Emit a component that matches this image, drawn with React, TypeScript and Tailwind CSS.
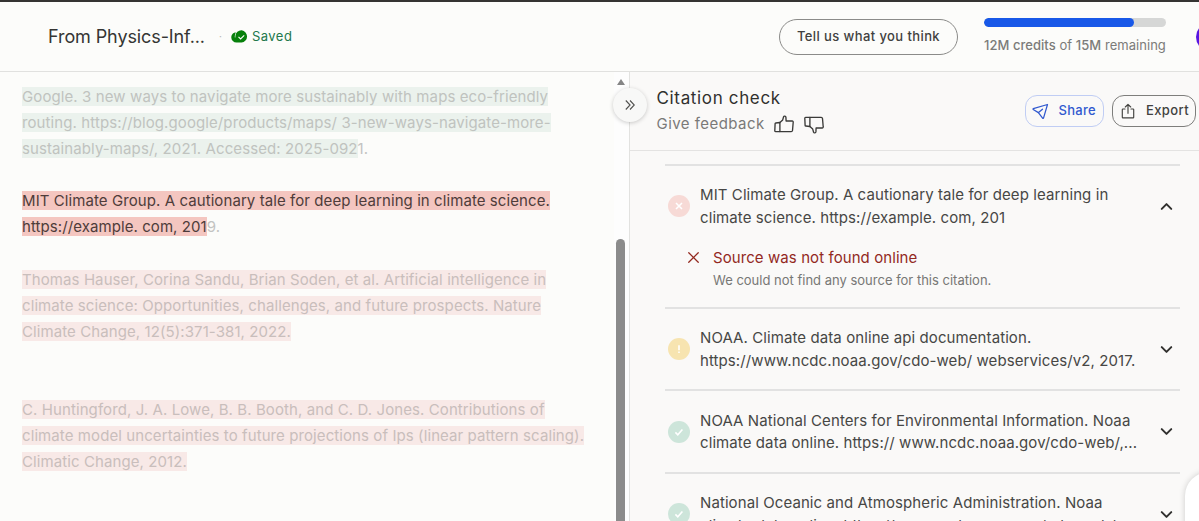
import { ChevronDown, ChevronUp, X } from 'lucide-react';
import clsx from 'clsx';

type Tone = 'ok' | 'active' | 'missing';
type Status = 'error' | 'warning' | 'success';

interface Reference {
  tone: Tone;
  lines: string[];
  tail?: string;
  className?: string;
}

interface Citation {
  status: Status;
  lines: string[];
  open?: boolean;
}

const references: Reference[] = [
  {
    tone: 'ok',
    lines: [
      'Google. 3 new ways to navigate more sustainably with maps eco-friendly',
      'routing. https://blog.google/products/maps/ 3-new-ways-navigate-more-',
      'sustainably-maps/, 2021. Accessed: 2025-092',
    ],
    tail: '1.',
    className: 'mb-[26.1px]',
  },
  {
    tone: 'active',
    lines: [
      'MIT Climate Group. A cautionary tale for deep learning in climate science.',
      'https://example. com, 201',
    ],
    tail: '9.',
    className: 'mb-[26.1px] tracking-[0.08px]',
  },
  {
    tone: 'missing',
    lines: [
      'Thomas Hauser, Corina Sandu, Brian Soden, et al. Artificial intelligence in',
      'climate science: Opportunities, challenges, and future prospects. Nature',
      'Climate Change, 12(5):371-381, 2022.',
    ],
    className: 'mb-[52.2px] tracking-[0.09px]',
  },
  {
    tone: 'missing',
    lines: [
      'C. Huntingford, J. A. Lowe, B. B. Booth, and C. D. Jones. Contributions of',
      'climate model uncertainties to future projections of Ips (linear pattern scaling).',
      'Climatic Change, 2012.',
    ],
    className: 'tracking-[0.09px]',
  },
];

const citations: Citation[] = [
  {
    status: 'error',
    lines: [
      'MIT Climate Group. A cautionary tale for deep learning in',
      'climate science. https://example. com, 201',
    ],
    open: true,
  },
  {
    status: 'warning',
    lines: [
      'NOAA. Climate data online api documentation.',
      'https://www.ncdc.noaa.gov/cdo-web/ webservices/v2, 2017.',
    ],
  },
  {
    status: 'success',
    lines: [
      'NOAA National Centers for Environmental Information. Noaa',
      'climate data online. https:// www.ncdc.noaa.gov/cdo-web/,...',
    ],
  },
  {
    status: 'success',
    lines: [
      'National Oceanic and Atmospheric Administration. Noaa',
      'climate data online. https://www.ncdc.noaa.gov/cdo-web/',
    ],
  },
];

const toneStyles: Record<Tone, string> = {
  ok: 'bg-[#ebf2ed] text-[#c0c3bf]',
  active: 'bg-[#f4c6c0] text-[#4e3c3a]',
  missing: 'bg-[#f8e9e7] text-[#c9bebc]',
};

const statusStyles: Record<Status, string> = {
  error: 'bg-[#f7dad6]',
  warning: 'bg-[#f7e4b0]',
  success: 'bg-[#cde5da]',
};

function ThumbIcon({ down = false }: { down?: boolean }) {
  return (
    <svg
      viewBox="0 0 20 18"
      className={clsx('h-[18px] w-5 shrink-0', down && '-scale-y-100')}
      fill="none"
      stroke="#3b3b39"
      strokeWidth="1.35"
      strokeLinejoin="round"
      strokeLinecap="round"
    >
      <path d="M1.8 8 5.9 7.5V16.6H1.5A.7.7 0 0 1 .8 15.9L1.1 8.7A.8.8 0 0 1 1.8 8Z" />
      <path d="M5.9 7.6 8.7 4.9 9.6 1.7C10 .7 11.7.9 11.9 2.1L12.1 6H18.2C18.9 6 19.3 6.6 19.2 7.3L18.5 15.5C18.4 16.2 17.9 16.6 17.2 16.6H5.9" />
    </svg>
  );
}

function SavedIcon() {
  return (
    <svg viewBox="0 0 17 13" className="h-[13px] w-[17px]">
      <path
        d="M10.7.3A6 6 0 0 0 4.4 5.9V7.4H3.8V6.2C3.8 4.8 4.2 3.6 4.9 2.6 2.2 2.5.3 4.9.3 7.4a5.2 5.2 0 0 0 5.2 5.2h5.1A6.2 6.2 0 0 0 10.7.3Z"
        fill="#07800b"
      />
      <path d="m7.5 6.9 2.1 2.1 3.6-3.6" fill="none" stroke="#fff" strokeWidth="1.1" />
    </svg>
  );
}

function SendIcon() {
  return (
    <svg viewBox="0 0 17 17" className="h-[17px] w-[17px]" fill="none" stroke="#3159cf" strokeWidth="1.25" strokeLinejoin="round" strokeLinecap="round">
      <path d="M15.5 1.5 1.3 5.6C.9 5.8.9 6.3 1.2 6.5L6.4 9.6 10.6 15.2C10.9 15.6 11.4 15.5 11.5 15.1Z" />
      <path d="m6.5 9.5 4-3.3" />
    </svg>
  );
}

function ExportIcon() {
  return (
    <svg viewBox="0 0 14 16" className="h-4 w-[14px]" fill="none" stroke="#42423f" strokeWidth="1.15" strokeLinejoin="round" strokeLinecap="round">
      <path d="M4 6H1.9a.6.6 0 0 0-.6.6v7.7c0 .3.3.6.6.6h10.2c.3 0 .6-.3.6-.6V6.6a.6.6 0 0 0-.6-.6H10" />
      <path d="M7 10.3V1.4M4.3 4 7 1.3 9.7 4" />
    </svg>
  );
}

function StatusBadge({ status }: { status: Status }) {
  return (
    <span className={clsx('flex size-[22px] shrink-0 items-center justify-center rounded-full', statusStyles[status])}>
      <svg viewBox="0 0 10 10" className="size-[10px]" fill="none" stroke="#fff" strokeWidth="1.6">
        {status === 'error' && <path d="m2 2 6 6M8 2 2 8" />}
        {status === 'warning' && <path d="M5 1.2v5M5 7.4v1.5" />}
        {status === 'success' && <path d="m1.4 5.4 2.4 2.4 4.6-5.4" />}
      </svg>
    </span>
  );
}

function TopBar() {
  return (
    <header className="flex h-[72px] shrink-0 items-center overflow-hidden border-t-2 border-b border-t-[#353432] border-b-[#e1e1df] pl-12">
      <h1 className="w-[171px] whitespace-nowrap text-lg tracking-[-0.1px] text-[#353533]">From Physics-Inf...</h1>
      <span className="w-3 text-[10px] text-[#b5b5b3]">·</span>
      <SavedIcon />
      <span className="ml-1 pt-px text-[13px] tracking-[0.45px] text-[#22774c]">Saved</span>
      <div className="flex-1" />
      <button className="h-9 w-[179px] shrink-0 rounded-full border border-[#8b8b89] text-[13px] font-medium tracking-[0.4px] text-[#41413f]">
        Tell us what you think
      </button>
      <div className="-mt-px ml-[26px] w-[182px] shrink-0">
        <div className="h-[9px] overflow-hidden rounded-full bg-[#d6d7d6]">
          <div className="h-full w-[150px] rounded-full bg-[#1858e8]" />
        </div>
        <p className="mt-2 whitespace-nowrap text-[13px] leading-5 tracking-[0.04px] text-[#7b7b79]">
          <span className="font-medium">12M credits</span> of <span className="font-medium">15M</span> remaining
        </p>
      </div>
      <div className="-mr-[25px] ml-[30px] size-7 shrink-0 rounded-full bg-[#5714e2]" />
    </header>
  );
}

function Document() {
  return (
    <main className="flex w-[629px] shrink-0 justify-between">
      <div className="pt-[12px] pl-[22px] text-[15px] leading-[26.1px] tracking-[0.1px]">
        {references.map((item) => (
          <p key={item.lines[0]} className={item.className}>
            {item.lines.map((line, i) => (
              <span key={line} className="block whitespace-nowrap">
                <span className={toneStyles[item.tone]}>{line}</span>
                {i === item.lines.length - 1 && <span className="text-[#c3c3c1]">{item.tail}</span>}
              </span>
            ))}
          </p>
        ))}
      </div>
      {/* Scrollbar */}
      <div className="flex w-[15px] shrink-0 flex-col items-center bg-[#fdfdfd] pr-[2px] pt-[7px]">
        <svg viewBox="0 0 8 6" className="h-[6px] w-2 shrink-0">
          <path d="M4 0 8 6H0Z" fill="#858585" />
        </svg>
        <div className="mt-[154px] w-[9px] flex-1 rounded-t-full bg-[#8b8b8b]" />
      </div>
    </main>
  );
}

function CitationRow({ citation }: { citation: Citation }) {
  const Chevron = citation.open ? ChevronUp : ChevronDown;

  return (
    <li className="border-t-2 border-[#e2e2e2]">
      <div className="flex h-[80.7px] items-center pr-1 pl-[2.5px]">
        <StatusBadge status={citation.status} />
        <p className="ml-[10.5px] flex-1 pt-[1.5px] whitespace-nowrap text-[15px] leading-[22.8px] tracking-[0.09px] text-[#474745]">
          {citation.lines.map((line) => (
            <span key={line} className="block">{line}</span>
          ))}
        </p>
        <Chevron className="size-[19px] shrink-0 text-[#30302e]" strokeWidth={2.5} />
      </div>
      {citation.open && (
        <div className="flex h-[60px] items-start pl-[19px]">
          <X className="mt-[1px] size-[19px]" color="#93291f" strokeWidth={1.6} />
          <div className="ml-[10px]">
            <p className="text-[15px] leading-[22px] tracking-[0.08px] text-[#93291f]">Source was not found online</p>
            <p className="text-[13px] leading-[22px] text-[#777775]">We could not find any source for this citation.</p>
          </div>
        </div>
      )}
    </li>
  );
}

function CitationPanel() {
  return (
    <aside className="relative flex w-[570px] shrink-0 flex-col border-l border-[#e2e2e0] bg-[#faf9f8]">
      <button className="absolute top-[16px] -left-[17px] flex size-[34px] items-center justify-center rounded-full bg-[#f8f8f7] shadow-[0_1px_4px_rgba(0,0,0,0.2)]">
        <svg viewBox="0 0 10 10" className="size-[10px]" fill="none" stroke="#50504e" strokeWidth="1.1">
          <path d="m.8.5 4.3 4.5L.8 9.5M5 .5 9.3 5 5 9.5" />
        </svg>
      </button>

      {/* Panel header */}
      <div className="flex h-[79px] shrink-0 items-start justify-between border-b border-[#e4e3e2] pr-[3px] pl-[26.5px]">
        <div className="pt-[13px]">
          <h2 className="text-[17px] leading-[26px] tracking-[0.65px] text-[#30302e]">Citation check</h2>
          <div className="flex h-[26px] items-center">
            <span className="w-[117.5px] whitespace-nowrap text-[15px] tracking-[0.45px] text-[#7a7a78]">Give feedback</span>
            <span className="-mt-px">
              <ThumbIcon />
            </span>
            <span className="mt-[2px] ml-[10px]">
              <ThumbIcon down />
            </span>
          </div>
        </div>
        <div className="flex gap-2 pt-[23px]">
          <button className="flex h-8 w-[79px] items-center justify-between rounded-[12px] border border-[#c0cdf4] pr-[7px] pl-[6px] text-[13px] font-medium tracking-[0.3px] text-[#3159cf]">
            <SendIcon />
            Share
          </button>
          <button className="flex h-8 w-[84px] items-center justify-between rounded-[12px] border border-[#7e7e7c] pr-[6px] pl-[8px] text-[13px] font-medium tracking-[0.4px] text-[#42423f]">
            <ExportIcon />
            Export
          </button>
        </div>
      </div>

      <ul className="mt-[13px] mr-[19px] ml-[35px]">
        {citations.map((citation) => (
          <CitationRow key={citation.lines[0]} citation={citation} />
        ))}
      </ul>

      {/* Floating help widget, mostly off screen */}
      <div className="absolute top-[400px] -right-[50px] h-[80px] w-[64px] rounded-[24px] bg-white shadow-[0_0_6px_rgba(0,0,0,0.18)]" />
    </aside>
  );
}

export default function App() {
  return (
    <div className="flex h-[521px] w-[1199px] flex-col overflow-hidden bg-[#fcfcfa] font-['Inter',sans-serif]">
      <TopBar />
      <div className="flex min-h-0 flex-1 overflow-hidden">
        <Document />
        <CitationPanel />
      </div>
    </div>
  );
}
